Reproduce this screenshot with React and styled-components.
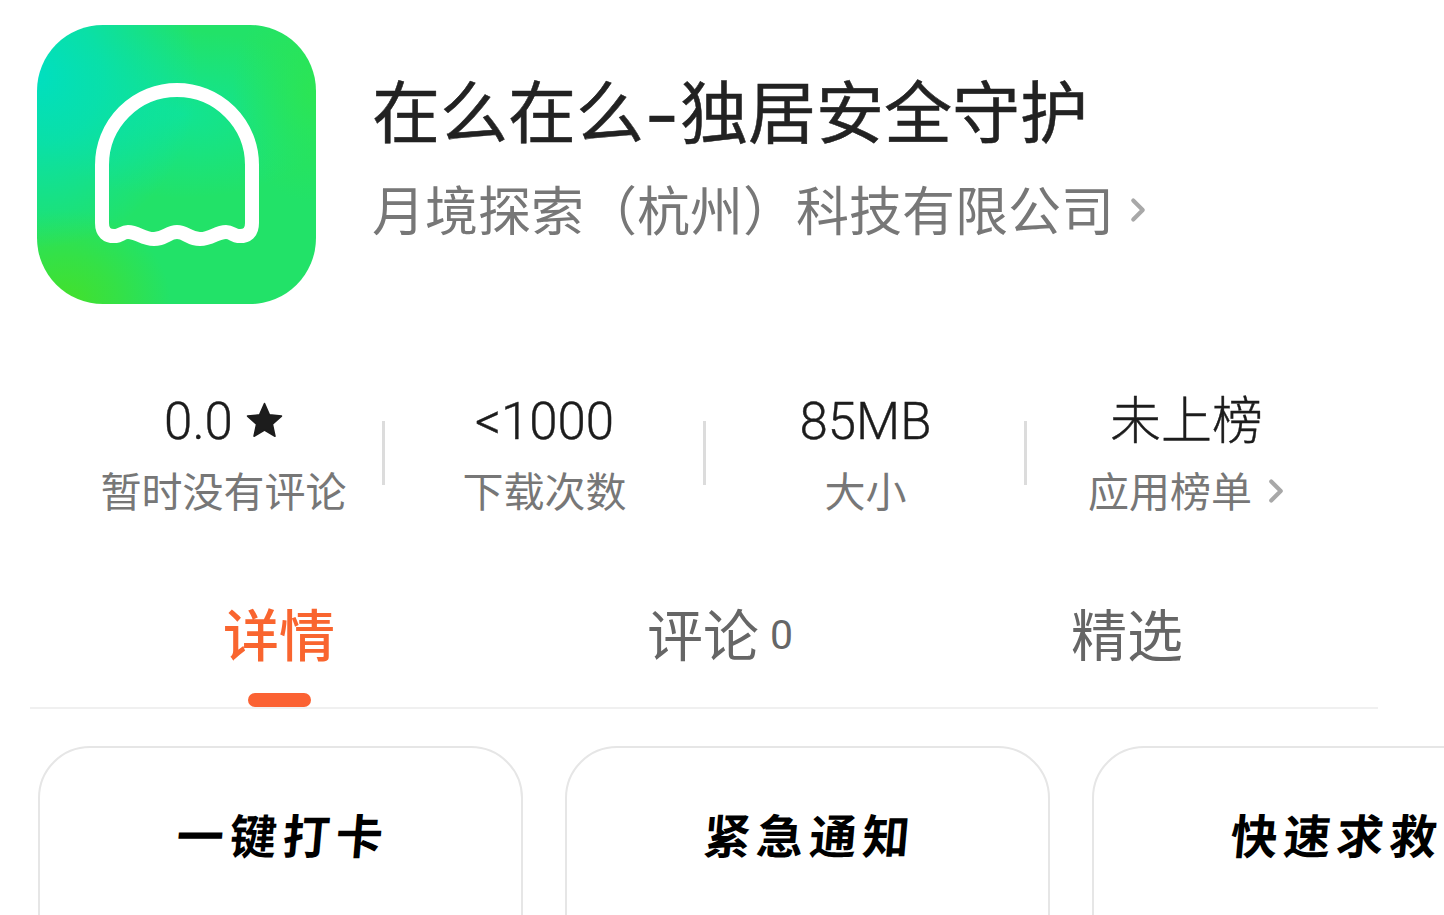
import React from "react";
import styled, { createGlobalStyle } from "styled-components";
import { ChevronRight } from "lucide-react";

const CJK = `"Noto Sans CJK SC", "Noto Sans", sans-serif`;

const GlobalStyle = createGlobalStyle`
  html, body {
    margin: 0;
    height: 100%;
    background: #fff;
    overflow: hidden;
  }
  * { box-sizing: border-box; }
`;

const Page = styled.div`
  width: 1444px;
  height: 915px;
  overflow: hidden;
  background: #fff;
  font-family: ${CJK};
`;

const Header = styled.header`
  display: flex;
  align-items: flex-start;
  padding: 25px 0 0 37px;
  gap: 56px;
`;

const AppIcon = styled.div`
  width: 279px;
  height: 279px;
  flex-shrink: 0;
  border-radius: 66px;
  overflow: hidden;
  background:
    radial-gradient(ellipse 58% 62% at 0% 18%, #00dfc0 0%, rgba(0, 223, 192, 0.7) 40%, rgba(0, 223, 192, 0) 100%),
    radial-gradient(ellipse 38% 34% at 10% 100%, #44e02a 0%, rgba(68, 224, 42, 0.55) 50%, rgba(68, 224, 42, 0) 100%),
    radial-gradient(ellipse 30% 40% at 100% 24%, #2ce554 0%, rgba(44, 229, 84, 0) 100%),
    radial-gradient(ellipse 55% 30% at 52% 32%, #11e493 0%, rgba(17, 228, 147, 0) 100%),
    #22e268;
  svg { display: block; }
`;

const Names = styled.div`
  display: flex;
  flex-direction: column;
  padding-top: 34px;
`;

const Title = styled.h1`
  margin: 0;
  font-size: 68px;
  line-height: 100px;
  font-weight: 400;
  color: #222;
  -webkit-text-stroke: 0.5px #222;
  white-space: nowrap;
`;

const Hyphen = styled.span`
  display: inline-block;
  width: 36px;
  text-align: center;
  font-weight: 500;
  transform: scaleX(1.35);
`;

const Developer = styled.div`
  display: flex;
  align-items: center;
  font-size: 53px;
  line-height: 98px;
  color: #777;
  white-space: nowrap;
`;

const Stats = styled.section`
  display: grid;
  grid-template-columns: repeat(4, 321px);
  margin: 78px 0 0 63px;
`;

const Stat = styled.div`
  position: relative;
  display: flex;
  flex-direction: column;
  align-items: center;
  height: 120px;

  &:not(:last-child)::after {
    content: "";
    position: absolute;
    right: -1px;
    top: 39px;
    width: 3px;
    height: 64px;
    background: #dcdcdc;
  }
`;

const Value = styled.div`
  display: flex;
  align-items: center;
  gap: 13px;
  height: 66px;
  margin-top: 7px;
  font-family: Roboto, ${CJK};
  font-size: 51px;
  font-weight: 300;
  line-height: 66px;
  color: #1c1c1c;
  -webkit-text-stroke: 0.4px #1c1c1c;
`;

const Star = styled.svg`
  margin-top: -3px;
`;

const Label = styled.div`
  display: flex;
  align-items: center;
  height: 60px;
  margin-top: 4px;
  font-size: 41px;
  line-height: 60px;
  color: #777;
  white-space: nowrap;
`;

const Tabs = styled.nav`
  display: grid;
  grid-template-columns: repeat(3, 424px);
  width: 1348px;
  height: 132px;
  margin: 75px 0 0 30px;
  padding-left: 37px;
  border-bottom: 2px solid #f0f0f0;
`;

const Tab = styled.div`
  position: relative;
  display: flex;
  justify-content: center;
  padding-top: 14px;
  font-size: 56px;
  line-height: 82px;
  font-weight: ${(p) => (p.$active ? 500 : 400)};
  color: ${(p) => (p.$active ? "#f9652f" : "#666")};
`;

const TabLabel = styled.span`
  position: relative;
`;

const Count = styled.span`
  position: absolute;
  left: calc(100% + 11px);
  top: 14px;
  font-family: Roboto, ${CJK};
  font-size: 41px;
  line-height: 60px;
  font-weight: 400;
  color: #666;
`;

const Indicator = styled.span`
  position: absolute;
  left: 50%;
  bottom: 0;
  width: 63px;
  height: 14px;
  margin-left: -31px;
  border-radius: 7px;
  background: #fb6233;
`;

const Cards = styled.section`
  display: flex;
  gap: 42px;
  margin: 37px 0 0 38px;
`;

const Card = styled.article`
  flex: 0 0 485px;
  height: 300px;
  padding-top: 53px;
  border: 2px solid #e6e6e6;
  border-radius: 52px;
  text-align: center;
`;

const CardTitle = styled.div`
  display: inline-block;
  margin-left: 5px;
  font-size: 47px;
  line-height: 66px;
  font-weight: 700;
  letter-spacing: 6px;
  color: #000;
  transform: skewX(-5deg);
  white-space: nowrap;
`;

const GhostIcon = () => (
  <svg width="279" height="279" viewBox="0 0 279 279" fill="none">
    <path
      d="M65 140a75 75 0 0 1 150 0V198q0 14-14 13c-4-.5-7-4-12-4c-10 0-14 7-26 7c-11 0-14-7-23-7c-9 0-12 7-23 7c-12 0-16-7-26-7c-5 0-8 3.500-12 4q-14 1-14-13Z"
      stroke="#fff"
      strokeWidth="14"
      strokeLinejoin="round"
    />
  </svg>
);

const StarIcon = () => (
  <Star width="37" height="37" viewBox="0 0 36 36">
    <path
      d="M18 1.500l4.800 11 11.700 1.200-8.800 7.900 2.500 11.700L18 27.300 7.800 33.300l2.500-11.700-8.800-7.900 11.700-1.200Z"
      fill="#1c1c1c"
      stroke="#1c1c1c"
      strokeWidth="1.500"
      strokeLinejoin="round"
    />
  </Star>
);

const Chevron = styled(ChevronRight)`
  flex-shrink: 0;
  color: #a8a8a8;
  margin: 4px -10px 0 5px;
`;

const stats = [
  { value: "0.0", star: true, label: "暂时没有评论" },
  { value: "<1000", label: "下载次数" },
  { value: "85MB", label: "大小" },
  { value: "未上榜", label: "应用榜单", more: true },
];

const cards = ["一键打卡", "紧急通知", "快速求救"];

export default function App() {
  return (
    <Page>
      <GlobalStyle />
      <Header>
        <AppIcon>
          <GhostIcon />
        </AppIcon>
        <Names>
          <Title>
            在么在么<Hyphen>-</Hyphen>独居安全守护
          </Title>
          <Developer>
            月境探索（杭州）科技有限公司
            <Chevron size={38} strokeWidth={2.6} />
          </Developer>
        </Names>
      </Header>

      <Stats>
        {stats.map((s) => (
          <Stat key={s.label}>
            <Value>
              {s.value}
              {s.star && <StarIcon />}
            </Value>
            <Label>
              {s.label}
              {s.more && <Chevron size={38} strokeWidth={2.6} />}
            </Label>
          </Stat>
        ))}
      </Stats>

      <Tabs>
        <Tab $active>
          详情
          <Indicator />
        </Tab>
        <Tab>
          <TabLabel>
            评论
            <Count>0</Count>
          </TabLabel>
        </Tab>
        <Tab>精选</Tab>
      </Tabs>

      <Cards>
        {cards.map((c) => (
          <Card key={c}>
            <CardTitle>{c}</CardTitle>
          </Card>
        ))}
      </Cards>
    </Page>
  );
}
